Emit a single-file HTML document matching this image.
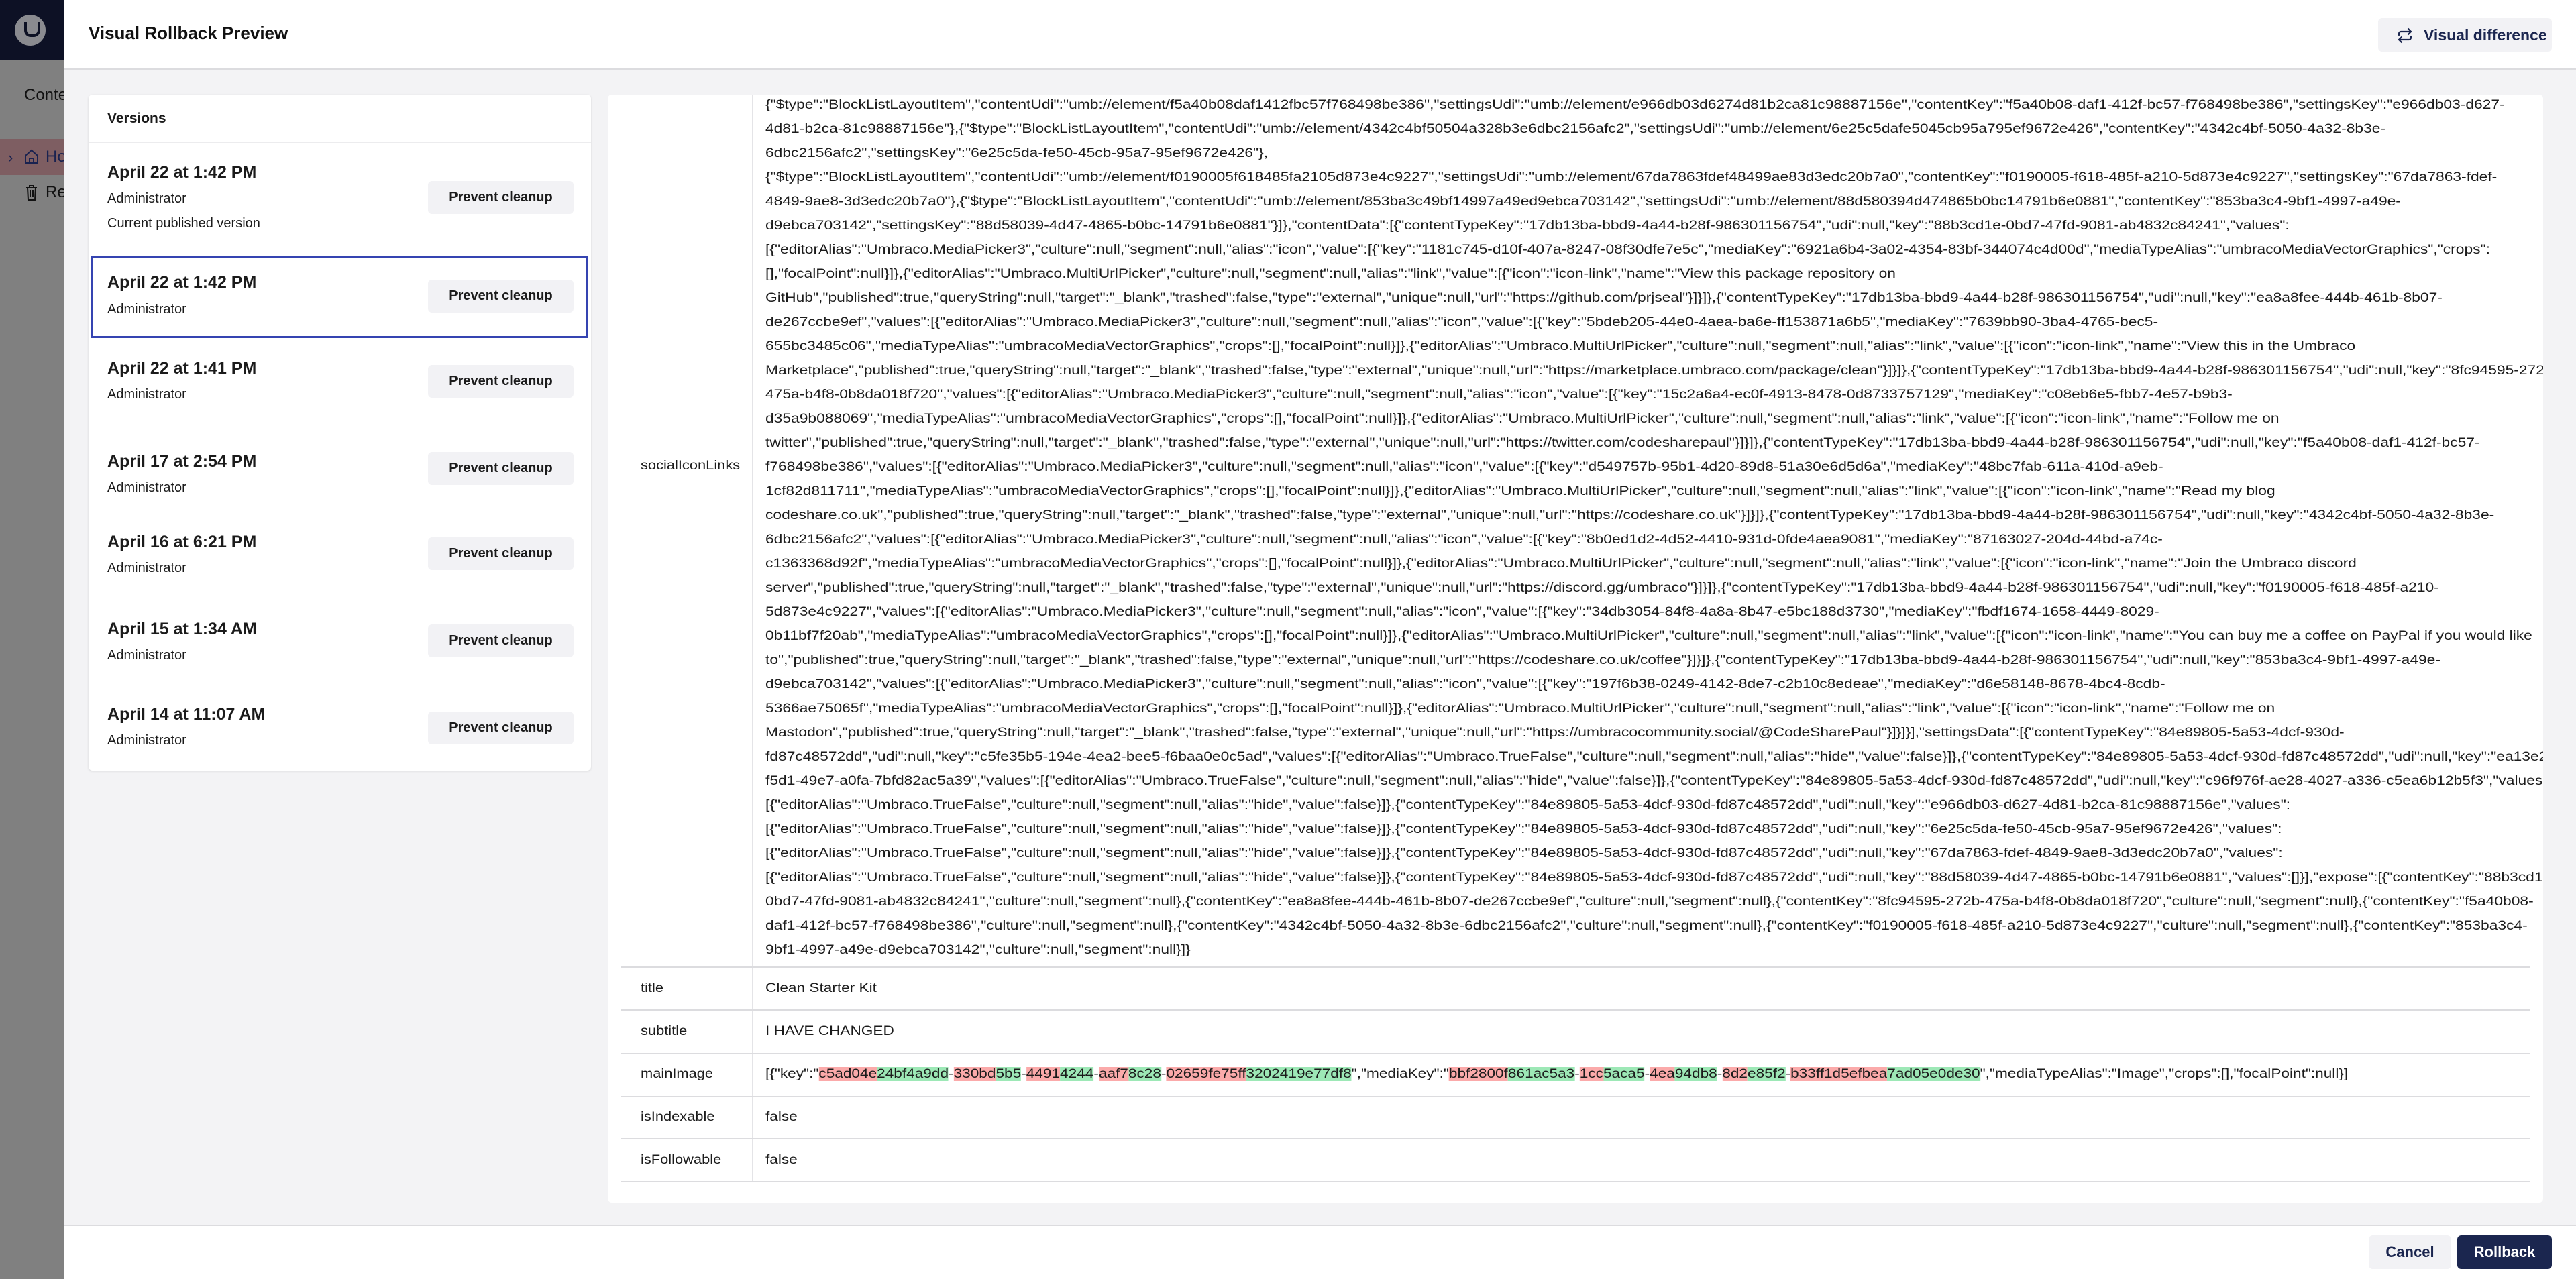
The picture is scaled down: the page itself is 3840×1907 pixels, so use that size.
<!DOCTYPE html>
<html><head><meta charset="utf-8"><style>
*{box-sizing:border-box;margin:0;padding:0}
body{width:3840px;height:1907px;overflow:hidden;font-family:"Liberation Sans",sans-serif;color:#1b1b1b;position:relative;background:#7f7f7f}
.side{position:absolute;left:0;top:0;width:96px;height:1907px;background:#808080}
.side .top{height:90px;background:#0d1125;position:relative}
.logo{position:absolute;left:22px;top:22px;width:46px;height:46px;border-radius:50%;background:#8a8b90}
.logo:after{content:"";position:absolute;left:14px;top:11px;width:16px;height:18px;border:4px solid #0d1125;border-top:none;border-radius:0 0 10px 10px}
.side .t{position:absolute;left:36px;top:128px;font-size:24px;color:#111}
.side .hl{position:absolute;left:0;top:207px;width:96px;height:54px;background:#7e5e62}
.modal{position:absolute;left:96px;top:0;width:3744px;height:1907px;background:#f3f3f5}
.hdr{position:absolute;left:0;top:0;width:100%;height:104px;background:#fff;border-bottom:2px solid #dcdcdf}
.hdr h1{position:absolute;left:36px;top:34px;font-size:26px;font-weight:bold;color:#111}
.vd{position:absolute;left:3449px;top:27px;width:259px;height:50px;background:#f2f2f5;border-radius:6px;font-size:23px;font-weight:bold;color:#1b264f;line-height:50px;padding-left:68px}
.vd svg{position:absolute;left:28px;top:14px}
.ftr{position:absolute;left:0;top:1826px;width:100%;height:81px;background:#fff;border-top:2px solid #dcdcdf}
.btn{position:absolute;border-radius:6px;font-size:22px;font-weight:bold;text-align:center;line-height:50px;height:50px}
.ver{position:absolute;left:36px;top:141px;width:749px;height:1008px;background:#fff;border-radius:6px;box-shadow:0 1px 3px rgba(0,0,0,.12)}
.ver .vh{height:72px;border-bottom:2px solid #ececee;font-size:21px;font-weight:bold;padding:36px 0 0 28px;line-height:0}
.it{position:absolute;left:0;top:0;width:749px}
.it .d{position:absolute;left:28px;font-size:25px;font-weight:bold;white-space:nowrap}
.it .a{position:absolute;left:28px;font-size:20px;white-space:nowrap}
.pc{position:absolute;left:506px;width:217px;height:49px;background:#f2f2f5;border-radius:6px;font-size:20px;font-weight:bold;text-align:center;line-height:49px;color:#1b1b1b}
.sel{position:absolute;left:4px;top:241px;width:741px;height:122px;border:3px solid #3544b1}
.main{position:absolute;left:810px;top:141px;width:2885px;height:1652px;background:#fff;border-radius:6px;overflow:hidden}
.col{position:absolute;left:215px;top:0;width:2px;height:1620px;background:#e4e4e7}
.lbl{position:absolute;left:49px;font-size:19px;white-space:nowrap;transform:scaleX(1.15);transform-origin:0 0}
.val{position:absolute;left:235px;font-size:19px;white-space:nowrap;transform:scaleX(1.19);transform-origin:0 0}
.json{position:absolute;left:235px;top:-2px;font-size:19px;line-height:36px;white-space:nowrap;transform:scaleX(1.2);transform-origin:0 0}
.rl{position:absolute;left:20px;width:2845px;height:2px;background:#dcdcdf}
.r{background:#fbaaaa}.g{background:#9de8b6}
</style></head><body>
<div class="side"><div class="top"><div class="logo"></div></div>
<div class="t">Conte</div><div class="hl"></div>
<div style="position:absolute;left:12px;top:222px;font-size:22px;color:#1a2250">›</div>
<svg style="position:absolute;left:36px;top:221px" width="22" height="24" viewBox="0 0 22 24" fill="none" stroke="#1a2250" stroke-width="2"><path d="M2 11L11 3l9 8v11H2z"/><path d="M8 22v-7h6v7"/></svg>
<div style="position:absolute;left:68px;top:220px;font-size:24px;color:#1a2250">Ho</div>
<svg style="position:absolute;left:37px;top:274px" width="20" height="26" viewBox="0 0 20 26" fill="none" stroke="#111" stroke-width="2"><path d="M2 6h16M7 6V3h6v3M4 6l1 18h10l1-18M8 10v10M12 10v10"/></svg>
<div style="position:absolute;left:68px;top:273px;font-size:24px;color:#111">Re</div>
</div>
<div class="modal">
<div class="hdr"><h1>Visual Rollback Preview</h1>
<div class="vd"><svg width="24" height="24" viewBox="0 0 24 24" fill="none" stroke="#1b264f" stroke-width="2.2" stroke-linecap="round" stroke-linejoin="round"><path d="M17 2l4 4-4 4"/><path d="M3 11V9a3 3 0 0 1 3-3h15"/><path d="M7 22l-4-4 4-4"/><path d="M21 13v2a3 3 0 0 1-3 3H3"/></svg>Visual difference</div></div>

<div class="ver"><div class="vh">Versions</div>
<div class="it"><div class="d" style="top:102px">April 22 at 1:42 PM</div><div class="a" style="top:144px">Administrator</div><div class="a" style="top:181px">Current published version</div><div class="pc" style="top:129px">Prevent cleanup</div></div>
<div class="sel"></div>
<div class="it"><div class="d" style="top:266px">April 22 at 1:42 PM</div><div class="a" style="top:309px">Administrator</div><div class="pc" style="top:276px">Prevent cleanup</div></div>
<div class="it"><div class="d" style="top:394px">April 22 at 1:41 PM</div><div class="a" style="top:436px">Administrator</div><div class="pc" style="top:403px">Prevent cleanup</div></div>
<div class="it"><div class="d" style="top:533px">April 17 at 2:54 PM</div><div class="a" style="top:575px">Administrator</div><div class="pc" style="top:533px">Prevent cleanup</div></div>
<div class="it"><div class="d" style="top:653px">April 16 at 6:21 PM</div><div class="a" style="top:695px">Administrator</div><div class="pc" style="top:660px">Prevent cleanup</div></div>
<div class="it"><div class="d" style="top:783px">April 15 at 1:34 AM</div><div class="a" style="top:825px">Administrator</div><div class="pc" style="top:790px">Prevent cleanup</div></div>
<div class="it"><div class="d" style="top:910px">April 14 at 11:07 AM</div><div class="a" style="top:952px">Administrator</div><div class="pc" style="top:920px">Prevent cleanup</div></div>
</div>

<div class="main">
<div class="col"></div>
<div class="lbl" style="top:543px">socialIconLinks</div>
<div class="json">{"$type":"BlockListLayoutItem","contentUdi":"umb://element/f5a40b08daf1412fbc57f768498be386","settingsUdi":"umb://element/e966db03d6274d81b2ca81c98887156e","contentKey":"f5a40b08-daf1-412f-bc57-f768498be386","settingsKey":"e966db03-d627-<br>4d81-b2ca-81c98887156e"},{"$type":"BlockListLayoutItem","contentUdi":"umb://element/4342c4bf50504a328b3e6dbc2156afc2","settingsUdi":"umb://element/6e25c5dafe5045cb95a795ef9672e426","contentKey":"4342c4bf-5050-4a32-8b3e-<br>6dbc2156afc2","settingsKey":"6e25c5da-fe50-45cb-95a7-95ef9672e426"},<br>{"$type":"BlockListLayoutItem","contentUdi":"umb://element/f0190005f618485fa2105d873e4c9227","settingsUdi":"umb://element/67da7863fdef48499ae83d3edc20b7a0","contentKey":"f0190005-f618-485f-a210-5d873e4c9227","settingsKey":"67da7863-fdef-<br>4849-9ae8-3d3edc20b7a0"},{"$type":"BlockListLayoutItem","contentUdi":"umb://element/853ba3c49bf14997a49ed9ebca703142","settingsUdi":"umb://element/88d580394d474865b0bc14791b6e0881","contentKey":"853ba3c4-9bf1-4997-a49e-<br>d9ebca703142","settingsKey":"88d58039-4d47-4865-b0bc-14791b6e0881"}]},"contentData":[{"contentTypeKey":"17db13ba-bbd9-4a44-b28f-986301156754","udi":null,"key":"88b3cd1e-0bd7-47fd-9081-ab4832c84241","values":<br>[{"editorAlias":"Umbraco.MediaPicker3","culture":null,"segment":null,"alias":"icon","value":[{"key":"1181c745-d10f-407a-8247-08f30dfe7e5c","mediaKey":"6921a6b4-3a02-4354-83bf-344074c4d00d","mediaTypeAlias":"umbracoMediaVectorGraphics","crops":<br>[],"focalPoint":null}]},{"editorAlias":"Umbraco.MultiUrlPicker","culture":null,"segment":null,"alias":"link","value":[{"icon":"icon-link","name":"View this package repository on<br>GitHub","published":true,"queryString":null,"target":"_blank","trashed":false,"type":"external","unique":null,"url":"https://github.com/prjseal"}]}]},{"contentTypeKey":"17db13ba-bbd9-4a44-b28f-986301156754","udi":null,"key":"ea8a8fee-444b-461b-8b07-<br>de267ccbe9ef","values":[{"editorAlias":"Umbraco.MediaPicker3","culture":null,"segment":null,"alias":"icon","value":[{"key":"5bdeb205-44e0-4aea-ba6e-ff153871a6b5","mediaKey":"7639bb90-3ba4-4765-bec5-<br>655bc3485c06","mediaTypeAlias":"umbracoMediaVectorGraphics","crops":[],"focalPoint":null}]},{"editorAlias":"Umbraco.MultiUrlPicker","culture":null,"segment":null,"alias":"link","value":[{"icon":"icon-link","name":"View this in the Umbraco<br>Marketplace","published":true,"queryString":null,"target":"_blank","trashed":false,"type":"external","unique":null,"url":"https://marketplace.umbraco.com/package/clean"}]}]},{"contentTypeKey":"17db13ba-bbd9-4a44-b28f-986301156754","udi":null,"key":"8fc94595-272b-<br>475a-b4f8-0b8da018f720","values":[{"editorAlias":"Umbraco.MediaPicker3","culture":null,"segment":null,"alias":"icon","value":[{"key":"15c2a6a4-ec0f-4913-8478-0d8733757129","mediaKey":"c08eb6e5-fbb7-4e57-b9b3-<br>d35a9b088069","mediaTypeAlias":"umbracoMediaVectorGraphics","crops":[],"focalPoint":null}]},{"editorAlias":"Umbraco.MultiUrlPicker","culture":null,"segment":null,"alias":"link","value":[{"icon":"icon-link","name":"Follow me on<br>twitter","published":true,"queryString":null,"target":"_blank","trashed":false,"type":"external","unique":null,"url":"https://twitter.com/codesharepaul"}]}]},{"contentTypeKey":"17db13ba-bbd9-4a44-b28f-986301156754","udi":null,"key":"f5a40b08-daf1-412f-bc57-<br>f768498be386","values":[{"editorAlias":"Umbraco.MediaPicker3","culture":null,"segment":null,"alias":"icon","value":[{"key":"d549757b-95b1-4d20-89d8-51a30e6d5d6a","mediaKey":"48bc7fab-611a-410d-a9eb-<br>1cf82d811711","mediaTypeAlias":"umbracoMediaVectorGraphics","crops":[],"focalPoint":null}]},{"editorAlias":"Umbraco.MultiUrlPicker","culture":null,"segment":null,"alias":"link","value":[{"icon":"icon-link","name":"Read my blog<br>codeshare.co.uk","published":true,"queryString":null,"target":"_blank","trashed":false,"type":"external","unique":null,"url":"https://codeshare.co.uk"}]}]},{"contentTypeKey":"17db13ba-bbd9-4a44-b28f-986301156754","udi":null,"key":"4342c4bf-5050-4a32-8b3e-<br>6dbc2156afc2","values":[{"editorAlias":"Umbraco.MediaPicker3","culture":null,"segment":null,"alias":"icon","value":[{"key":"8b0ed1d2-4d52-4410-931d-0fde4aea9081","mediaKey":"87163027-204d-44bd-a74c-<br>c1363368d92f","mediaTypeAlias":"umbracoMediaVectorGraphics","crops":[],"focalPoint":null}]},{"editorAlias":"Umbraco.MultiUrlPicker","culture":null,"segment":null,"alias":"link","value":[{"icon":"icon-link","name":"Join the Umbraco discord<br>server","published":true,"queryString":null,"target":"_blank","trashed":false,"type":"external","unique":null,"url":"https://discord.gg/umbraco"}]}]},{"contentTypeKey":"17db13ba-bbd9-4a44-b28f-986301156754","udi":null,"key":"f0190005-f618-485f-a210-<br>5d873e4c9227","values":[{"editorAlias":"Umbraco.MediaPicker3","culture":null,"segment":null,"alias":"icon","value":[{"key":"34db3054-84f8-4a8a-8b47-e5bc188d3730","mediaKey":"fbdf1674-1658-4449-8029-<br>0b11bf7f20ab","mediaTypeAlias":"umbracoMediaVectorGraphics","crops":[],"focalPoint":null}]},{"editorAlias":"Umbraco.MultiUrlPicker","culture":null,"segment":null,"alias":"link","value":[{"icon":"icon-link","name":"You can buy me a coffee on PayPal if you would like<br>to","published":true,"queryString":null,"target":"_blank","trashed":false,"type":"external","unique":null,"url":"https://codeshare.co.uk/coffee"}]}]},{"contentTypeKey":"17db13ba-bbd9-4a44-b28f-986301156754","udi":null,"key":"853ba3c4-9bf1-4997-a49e-<br>d9ebca703142","values":[{"editorAlias":"Umbraco.MediaPicker3","culture":null,"segment":null,"alias":"icon","value":[{"key":"197f6b38-0249-4142-8de7-c2b10c8edeae","mediaKey":"d6e58148-8678-4bc4-8cdb-<br>5366ae75065f","mediaTypeAlias":"umbracoMediaVectorGraphics","crops":[],"focalPoint":null}]},{"editorAlias":"Umbraco.MultiUrlPicker","culture":null,"segment":null,"alias":"link","value":[{"icon":"icon-link","name":"Follow me on<br>Mastodon","published":true,"queryString":null,"target":"_blank","trashed":false,"type":"external","unique":null,"url":"https://umbracocommunity.social/@CodeSharePaul"}]}]}],"settingsData":[{"contentTypeKey":"84e89805-5a53-4dcf-930d-<br>fd87c48572dd","udi":null,"key":"c5fe35b5-194e-4ea2-bee5-f6baa0e0c5ad","values":[{"editorAlias":"Umbraco.TrueFalse","culture":null,"segment":null,"alias":"hide","value":false}]},{"contentTypeKey":"84e89805-5a53-4dcf-930d-fd87c48572dd","udi":null,"key":"ea13e2b8-<br>f5d1-49e7-a0fa-7bfd82ac5a39","values":[{"editorAlias":"Umbraco.TrueFalse","culture":null,"segment":null,"alias":"hide","value":false}]},{"contentTypeKey":"84e89805-5a53-4dcf-930d-fd87c48572dd","udi":null,"key":"c96f976f-ae28-4027-a336-c5ea6b12b5f3","values":<br>[{"editorAlias":"Umbraco.TrueFalse","culture":null,"segment":null,"alias":"hide","value":false}]},{"contentTypeKey":"84e89805-5a53-4dcf-930d-fd87c48572dd","udi":null,"key":"e966db03-d627-4d81-b2ca-81c98887156e","values":<br>[{"editorAlias":"Umbraco.TrueFalse","culture":null,"segment":null,"alias":"hide","value":false}]},{"contentTypeKey":"84e89805-5a53-4dcf-930d-fd87c48572dd","udi":null,"key":"6e25c5da-fe50-45cb-95a7-95ef9672e426","values":<br>[{"editorAlias":"Umbraco.TrueFalse","culture":null,"segment":null,"alias":"hide","value":false}]},{"contentTypeKey":"84e89805-5a53-4dcf-930d-fd87c48572dd","udi":null,"key":"67da7863-fdef-4849-9ae8-3d3edc20b7a0","values":<br>[{"editorAlias":"Umbraco.TrueFalse","culture":null,"segment":null,"alias":"hide","value":false}]},{"contentTypeKey":"84e89805-5a53-4dcf-930d-fd87c48572dd","udi":null,"key":"88d58039-4d47-4865-b0bc-14791b6e0881","values":[]}],"expose":[{"contentKey":"88b3cd1e-<br>0bd7-47fd-9081-ab4832c84241","culture":null,"segment":null},{"contentKey":"ea8a8fee-444b-461b-8b07-de267ccbe9ef","culture":null,"segment":null},{"contentKey":"8fc94595-272b-475a-b4f8-0b8da018f720","culture":null,"segment":null},{"contentKey":"f5a40b08-<br>daf1-412f-bc57-f768498be386","culture":null,"segment":null},{"contentKey":"4342c4bf-5050-4a32-8b3e-6dbc2156afc2","culture":null,"segment":null},{"contentKey":"f0190005-f618-485f-a210-5d873e4c9227","culture":null,"segment":null},{"contentKey":"853ba3c4-<br>9bf1-4997-a49e-d9ebca703142","culture":null,"segment":null}]}</div>
<div class="rl" style="top:1300px"></div>
<div class="lbl" style="top:1322px">title</div><div class="val" style="top:1322px">Clean Starter Kit</div>
<div class="rl" style="top:1364px"></div>
<div class="lbl" style="top:1386px">subtitle</div><div class="val" style="top:1386px">I HAVE CHANGED</div>
<div class="rl" style="top:1429px"></div>
<div class="lbl" style="top:1450px">mainImage</div><div class="val" style="top:1450px">[{"key":"<span class="r">c5ad04e</span><span class="g">24bf4a9dd</span>-<span class="r">330bd</span><span class="g">5b5</span>-<span class="r">4491</span><span class="g">4244</span>-<span class="r">aaf7</span><span class="g">8c28</span>-<span class="r">02659fe75ff</span><span class="g">3202419e77df8</span>","mediaKey":"<span class="r">bbf2800f</span><span class="g">861ac5a3</span>-<span class="r">1cc</span><span class="g">5aca5</span>-<span class="r">4ea</span><span class="g">94db8</span>-<span class="r">8d2</span><span class="g">e85f2</span>-<span class="r">b33ff1d5efbea</span><span class="g">7ad05e0de30</span>","mediaTypeAlias":"Image","crops":[],"focalPoint":null}]</div>
<div class="rl" style="top:1493px"></div>
<div class="lbl" style="top:1514px">isIndexable</div><div class="val" style="top:1514px">false</div>
<div class="rl" style="top:1556px"></div>
<div class="lbl" style="top:1578px">isFollowable</div><div class="val" style="top:1578px">false</div>
<div class="rl" style="top:1620px"></div>
</div>

<div class="ftr">
<div class="btn" style="left:3435px;top:14px;width:123px;background:#f2f2f5;color:#1b264f">Cancel</div>
<div class="btn" style="left:3567px;top:14px;width:141px;background:#1b264f;color:#fff">Rollback</div>
</div>
</div>
</body></html>
